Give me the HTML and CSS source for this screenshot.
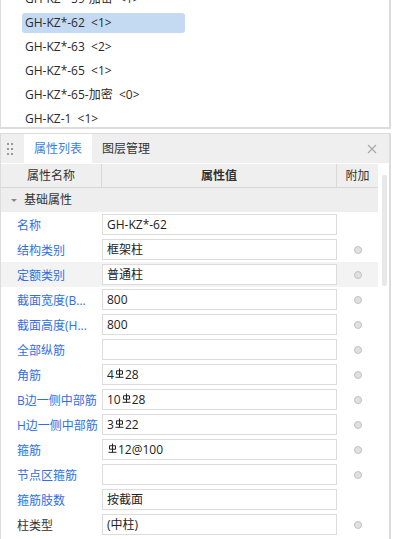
FILE: index.html
```html
<!DOCTYPE html>
<html>
<head>
<meta charset="utf-8">
<link rel="stylesheet" href="styles.css">
</head>
<body>
<div class="list">
  <div class="list-inner">
    <div class="item">GH-KZ*-59-加密&nbsp; &lt;1&gt;</div>
    <div class="item sel">GH-KZ*-62&nbsp; &lt;1&gt;</div>
    <div class="item">GH-KZ*-63&nbsp; &lt;2&gt;</div>
    <div class="item">GH-KZ*-65&nbsp; &lt;1&gt;</div>
    <div class="item">GH-KZ*-65-加密&nbsp; &lt;0&gt;</div>
    <div class="item">GH-KZ-1&nbsp; &lt;1&gt;</div>
  </div>
</div>
<div class="panel">
  <div class="tabbar">
    <div class="grip"><i></i><i></i><i></i><i></i><i></i><i></i></div>
    <div class="tab active">属性列表</div>
    <div class="tab">图层管理</div>
    <div class="close"><svg width="10" height="10" viewBox="0 0 10 10"><path d="M1 1L9 9M9 1L1 9" stroke="#a8a8a8" stroke-width="1.1"/></svg></div>
  </div>
  <div class="body">
    <div class="table">
      <div class="hrow">
        <div class="c1">属性名称</div>
        <div class="c2">属性值</div>
        <div class="c3">附加</div>
      </div>
      <div class="group"><span class="tri"></span>基础属性</div>
      <div class="row"><div class="c1">名称</div><div class="c2"><div class="inp">GH-KZ*-62</div></div><div class="c3"></div></div>
      <div class="row"><div class="c1">结构类别</div><div class="c2"><div class="inp">框架柱</div></div><div class="c3"><span class="dot"></span></div></div>
      <div class="row hl"><div class="c1">定额类别</div><div class="c2"><div class="inp">普通柱</div></div><div class="c3"><span class="dot"></span></div></div>
      <div class="row"><div class="c1">截面宽度(B...</div><div class="c2"><div class="inp">800</div></div><div class="c3"><span class="dot"></span></div></div>
      <div class="row"><div class="c1">截面高度(H...</div><div class="c2"><div class="inp">800</div></div><div class="c3"><span class="dot"></span></div></div>
      <div class="row"><div class="c1">全部纵筋</div><div class="c2"><div class="inp"></div></div><div class="c3"><span class="dot"></span></div></div>
      <div class="row"><div class="c1">角筋</div><div class="c2"><div class="inp">4<svg class="rb" width="9" height="10" viewBox="0 0 9 10"><path d="M4.5 0.5V9.5M1.5 2.8H7.5V6.2H1.5ZM0.5 9.3H8.5" fill="none" stroke="#222" stroke-width="1"/></svg>28</div></div><div class="c3"><span class="dot"></span></div></div>
      <div class="row"><div class="c1">B边一侧中部筋</div><div class="c2"><div class="inp">10<svg class="rb" width="9" height="10" viewBox="0 0 9 10"><path d="M4.5 0.5V9.5M1.5 2.8H7.5V6.2H1.5ZM0.5 9.3H8.5" fill="none" stroke="#222" stroke-width="1"/></svg>28</div></div><div class="c3"><span class="dot"></span></div></div>
      <div class="row"><div class="c1">H边一侧中部筋</div><div class="c2"><div class="inp">3<svg class="rb" width="9" height="10" viewBox="0 0 9 10"><path d="M4.5 0.5V9.5M1.5 2.8H7.5V6.2H1.5ZM0.5 9.3H8.5" fill="none" stroke="#222" stroke-width="1"/></svg>22</div></div><div class="c3"><span class="dot"></span></div></div>
      <div class="row"><div class="c1">箍筋</div><div class="c2"><div class="inp"><svg class="rb" width="9" height="10" viewBox="0 0 9 10"><path d="M4.5 0.5V9.5M1.5 2.8H7.5V6.2H1.5ZM0.5 9.3H8.5" fill="none" stroke="#222" stroke-width="1"/></svg>12@100</div></div><div class="c3"><span class="dot"></span></div></div>
      <div class="row"><div class="c1">节点区箍筋</div><div class="c2"><div class="inp"></div></div><div class="c3"><span class="dot"></span></div></div>
      <div class="row"><div class="c1">箍筋肢数</div><div class="c2"><div class="inp">按截面</div></div><div class="c3"></div></div>
      <div class="row"><div class="c1 dark">柱类型</div><div class="c2"><div class="inp">(中柱)</div></div><div class="c3"><span class="dot"></span></div></div>
    </div>
    <div class="scroll"><div class="thumb"></div></div>
  </div>
</div>
</body>
</html>
```
FILE: styles.css
```css
* { box-sizing: border-box; }
html, body { margin: 0; padding: 0; background: #fff; }
body {
  width: 395px; height: 539px; overflow: hidden;
  font-family: "Open Sans", "Noto Sans CJK SC", sans-serif;
  font-size: 12px; color: #333;
}
.list {
  width: 391px; height: 129px; overflow: hidden;
  border-left: 1px solid #dcdcdc; border-right: 2px solid #dcdcdc; border-bottom: 2px solid #dcdcdc;
}
.list-inner { margin-top: -11px; padding-left: 21px; }
.item {
  width: 163px; height: 20px; margin-bottom: 4px; line-height: 20px;
  padding-left: 3px; border-radius: 3px; white-space: nowrap; color: #2a2a2a;
}
.item.sel { background: #c4daf2; }
.panel {
  margin-top: 4px; width: 391px; height: 406px;
  border: 1px solid #dcdcdc; border-right-width: 2px; border-bottom: none;
}
.tabbar {
  height: 29px; background: #efefef; display: flex; align-items: stretch;
}
.grip {
  width: 23px; display: grid; grid-template-columns: 2px 2px; column-gap: 2px; row-gap: 3px;
  align-content: center; padding-left: 6px;
}
.grip i { width: 2px; height: 2px; background: #9a9a9a; }
.tab { padding: 0 10px; line-height: 29px; color: #333; white-space: nowrap; }
.tab.active { background: #fff; color: #3b7fe4; width: 68px; padding: 0; text-align: center; }
.close { margin-left: auto; width: 22px; display: flex; align-items: center; justify-content: flex-start; }
.body { display: flex; }
.table { width: 377px; border-top: 1px solid #fff; }
.hrow {
  display: flex; height: 24px; background: #efefef; border-bottom: 1px solid #d8d8d8;
}
.hrow > div { line-height: 23px; border-right: 1px solid #d8d8d8; white-space: nowrap; }
.hrow .c1 { width: 101px; padding-left: 26px; }
.hrow .c2 { width: 235px; text-align: center; font-weight: bold; }
.hrow .c3 { width: 41px; text-align: center; border-right: none; }
.group {
  height: 24px; background: #eeeeee; line-height: 24px; display: flex; align-items: center;
}
.tri {
  width: 0; height: 0; margin: 0 7px 0 10px;
  border-left: 3px solid transparent; border-right: 3px solid transparent; border-top: 3px solid #8a8a8a;
}
.row { display: flex; height: 25px; align-items: center; }
.row.hl { background: #f3f3f3; }
.row .c1 { width: 101px; padding-left: 16px; color: #2f6fe5; white-space: nowrap; overflow: hidden; }
.row .c1.dark { color: #333; }
.row .c2 { width: 235px; }
.inp {
  height: 21px; border: 1px solid #dcdcdc; background: #fff; line-height: 19px;
  padding-left: 4px; display: flex; align-items: center; color: #222; white-space: nowrap;
}
.rb { margin: 0 1px; position: relative; top: -2px; }
.row .c3 { width: 41px; display: flex; justify-content: center; }
.dot {
  width: 8px; height: 8px; border-radius: 50%; background: #e0e0e0; border: 1px solid #c2c2c2;
}
.scroll { width: 12px; padding: 12px 0 0 4px; }
.thumb { width: 5px; height: 111px; background: #e8e8e8; border-radius: 2px; }
```
